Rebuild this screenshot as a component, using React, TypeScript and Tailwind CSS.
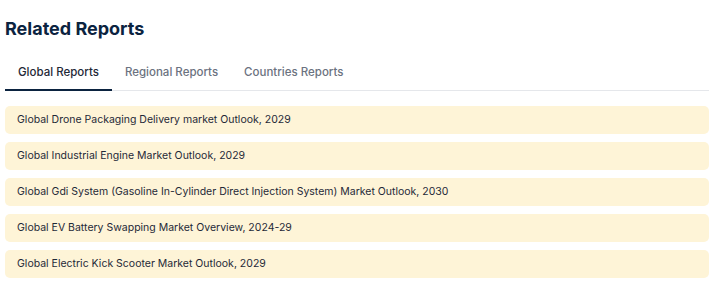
const TABS = ['Global Reports', 'Regional Reports', 'Countries Reports']

const REPORTS = [
  'Global Drone Packaging Delivery market Outlook, 2029',
  'Global Industrial Engine Market Outlook, 2029',
  'Global Gdi System (Gasoline In-Cylinder Direct Injection System) Market Outlook, 2030',
  'Global EV Battery Swapping Market Overview, 2024-29',
  'Global Electric Kick Scooter Market Outlook, 2029',
]

export default function App() {
  const active = 0
  return (
    <div className="w-[721px] h-[291px] bg-white font-['Inter',sans-serif] pl-[5px] pr-[12px] pt-[17px]">
      <h2 className="text-[18px] font-bold text-[#0b2340] leading-[24px]">Related Reports</h2>

      <div className="mt-[18px] flex border-b border-[#e5e7eb]">
        {TABS.map((t, i) => (
          <button key={t} type="button"
            className={`px-[13px] pt-[5px] pb-[9px] text-[11.5px] font-medium leading-[16px] -mb-px border-b-2 ${i === active ? 'border-[#0b2340] text-[#1f2937]' : 'border-transparent text-[#6b7280]'}`}>
            {t}
          </button>
        ))}
      </div>

      <div className="mt-[15px] flex flex-col gap-[8px]">
        {REPORTS.map((r) => (
          <a key={r} href="#" className="h-[28px] flex items-center px-[12px] rounded-[5px] bg-[#fef4d7] text-[10.5px] text-[#1f2937]">
            {r}
          </a>
        ))}
      </div>
    </div>
  )
}
